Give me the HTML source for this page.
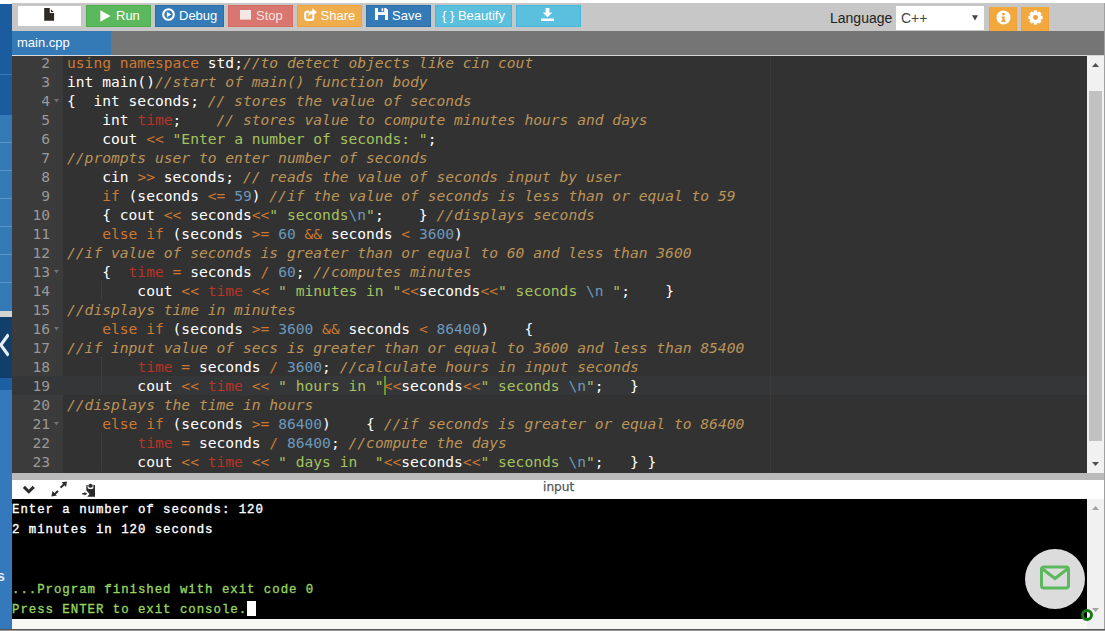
<!DOCTYPE html>
<html lang="en">
<head>
<meta charset="utf-8">
<title>main.cpp - Online C++ Compiler</title>
<style>
html,body{margin:0;padding:0;}
body{width:1105px;height:631px;overflow:hidden;background:#fff;position:relative;font-family:"Liberation Sans",Arial,sans-serif;}
.abs{position:absolute;}
/* left sidebar */
#side{left:0;top:4px;width:12px;height:625px;background:#337ab7;overflow:hidden;}
#side div{position:absolute;left:0;width:12px;}
/* toolbar */
#toolbar{left:12px;top:3px;width:1092px;height:28px;background:#c7c7c7;}
.btn{position:absolute;top:5px;height:22px;color:#fff;font-size:13px;line-height:22px;white-space:nowrap;}
.btn span{position:absolute;top:0;}
#tabbar{left:12px;top:31px;width:1092px;height:24px;background:#757575;}
#tab{left:12px;top:31px;width:99px;height:24px;background:#337ab7;color:#fff;font-size:13px;line-height:24px;}
/* editor */
#editor{left:12px;top:56px;width:1075px;height:417px;background:#323232;overflow:hidden;font-family:"DejaVu Sans Mono","Liberation Mono",monospace;font-size:14.615px;color:#fff;}
#gutter{position:absolute;left:0;top:0;width:51px;height:417px;background:#3b3b3b;}
.ln{position:absolute;left:0;width:38px;height:19px;line-height:19px;text-align:right;color:#999;}
.cl{position:absolute;left:55px;height:19px;line-height:19px;white-space:pre;}
.k{color:#CC7833;}
.n{color:#6C99BB;}
.s{color:#A5C261;}
.c{color:#BC9458;font-style:italic;}
.f{color:#B83426;}
/* console */
#conbar{left:12px;top:480px;width:1092px;height:19px;background:#fff;}
#console{left:12px;top:499px;width:1075px;height:120px;background:#000;font-family:"Liberation Mono",monospace;font-size:12.4px;letter-spacing:0.96px;-webkit-text-stroke:0.35px currentColor;color:#fff;}
.tl{position:absolute;left:0;height:20px;line-height:20px;white-space:pre;}
.g{color:#96d45c;}
</style>
</head>
<body>
<!-- toolbar -->
<div id="toolbar" class="abs"></div>
<div id="tabbar" class="abs"></div>
<div id="tab" class="abs"><span style="position:absolute;left:5px;">main.cpp</span></div>
<div class="abs" style="left:12px;top:55px;width:1092px;height:1px;background:#d8d8d8;"></div>

<!-- toolbar buttons -->
<div class="abs" style="left:18px;top:6px;width:63px;height:20px;background:#fff;">
<svg style="position:absolute;left:26px;top:2px" width="11" height="13" viewBox="0 0 11 13"><path d="M0.2 0h5.6v4.9h4.3V12.7H0.2z M6.9 1.2L9.8 4H6.9z" fill="#2e2a26"/></svg>
</div>
<div class="btn" style="left:86px;width:65px;background:#5cb85c;box-shadow:inset 0 0 0 1px #4cae4c;">
<svg style="position:absolute;left:14px;top:5px" width="11" height="12" viewBox="0 0 11 12"><path d="M0.3 0.2L10.6 6L0.3 11.8z" fill="#fff"/></svg>
<span style="left:30px">Run</span></div>
<div class="btn" style="left:155px;width:69px;background:#337ab7;box-shadow:inset 0 0 0 1px #2e6da4;">
<svg style="position:absolute;left:7px;top:3px" width="13" height="13" viewBox="0 0 13 13"><circle cx="6.5" cy="6.5" r="5.3" fill="none" stroke="#fff" stroke-width="2.1"/><path d="M4.9 3.7L9.3 6.5L4.9 9.3z" fill="#fff"/></svg>
<span style="left:24px">Debug</span></div>
<div class="btn" style="left:228px;width:65px;background:#d9766f;color:#f4e4e2;box-shadow:inset 0 0 0 1px #d66b64;">
<svg style="position:absolute;left:12px;top:5px" width="11" height="10" viewBox="0 0 11 10"><rect x="0" y="0" width="11" height="9.6" fill="#f4e8e6"/></svg>
<span style="left:28px">Stop</span></div>
<div class="btn" style="left:297px;width:65px;background:#f0ad4e;box-shadow:inset 0 0 0 1px #eea236;">
<svg style="position:absolute;left:7px;top:3px" width="13" height="13" viewBox="0 0 13 13"><path d="M9.3 8.4v1.4a2 2 0 0 1-2 2H3.2a2 2 0 0 1-2-2V5.6a2 2 0 0 1 2-2h1.2" fill="none" stroke="#fff" stroke-width="2.2" stroke-linecap="round"/><path d="M8.3 0.3L13 4.3L8.3 8.3V5.9C6.3 5.9 5 6.9 4.4 9C4 5.4 5.6 3 8.3 2.7z" fill="#fff"/></svg>
<span style="left:23.5px">Share</span></div>
<div class="btn" style="left:366px;width:65px;background:#337ab7;box-shadow:inset 0 0 0 1px #2e6da4;">
<svg style="position:absolute;left:9px;top:3px" width="13" height="12" viewBox="0 0 13 12"><path d="M0 0h3v4h6.2V0H11l2 2v10H0z M6.6 0.3h1.6v2.9H6.6z M3 7h7v5H3z" fill="#fff" fill-rule="evenodd"/><path d="M3 7.6h7v4.4H3z" fill="#337ab7"/></svg>
<span style="left:26px">Save</span></div>
<div class="btn" style="left:435px;width:77px;background:#5bc0de;box-shadow:inset 0 0 0 1px #46b8da;">
<span style="left:7px">{ } Beautify</span></div>
<div class="btn" style="left:516px;width:65px;background:#5bc0de;box-shadow:inset 0 0 0 1px #46b8da;">
<svg style="position:absolute;left:25px;top:3px" width="13" height="13" viewBox="0 0 13 13"><path d="M4.6 0h3.8v4.6h2.9L6.5 9.3 1.7 4.6h2.9z M0 10.4h13V13H0z" fill="#fff"/></svg>
</div>
<div class="abs" style="left:830px;top:10px;font-size:14px;line-height:16px;color:#222;">Language</div>
<div class="abs" style="left:896px;top:6px;width:88px;height:24px;background:#fff;font-size:14px;line-height:24px;color:#444;"><span style="position:absolute;left:5px;">C++</span>
<svg style="position:absolute;left:76px;top:9px" width="6" height="6" viewBox="0 0 6 6"><path d="M0 0.3h6L3 5.6z" fill="#444"/></svg></div>
<div class="abs" style="left:989px;top:7px;width:26px;height:24px;background:#f3a83e;border-left:1px solid #eea236;border-right:1px solid #eea236;">
<svg style="position:absolute;left:6px;top:3.2px" width="15" height="15" viewBox="0 0 15 15"><circle cx="7.5" cy="7.5" r="7" fill="#fff"/><path d="M6.3 3h2.4v2.2H6.3z M5.6 6.4h3.1v4h1v1.6H5.4v-1.6h1V8h-0.8z" fill="#f0a030"/></svg>
</div>
<div class="abs" style="left:1021px;top:7px;width:26px;height:24px;background:#f3a83e;border-left:1px solid #eea236;border-right:1px solid #eea236;">
<svg style="position:absolute;left:6px;top:3.2px" width="15" height="15" viewBox="-7.5 -7.5 15 15"><g fill="#fff"><circle r="5.6"/><rect x="-1.7" y="-7.1" width="3.4" height="14.2"/><rect x="-1.7" y="-7.1" width="3.4" height="14.2" transform="rotate(45)"/><rect x="-1.7" y="-7.1" width="3.4" height="14.2" transform="rotate(90)"/><rect x="-1.7" y="-7.1" width="3.4" height="14.2" transform="rotate(135)"/></g><circle r="2.4" fill="#f0a030"/></svg>
</div>

<!-- editor -->
<div id="editor" class="abs">
<div style="position:absolute;left:0;top:320px;width:1075px;height:19px;background:#353637;"></div>
<div style="position:absolute;left:758px;top:0;width:1px;height:417px;background:#3b3b3b;"></div>
<div id="gutter">
<svg style="position:absolute;left:42px;top:43px" width="5" height="4" viewBox="0 0 5 4"><path d="M0 0h5L2.5 3.6z" fill="#707070"/></svg>
<svg style="position:absolute;left:42px;top:214px" width="5" height="4" viewBox="0 0 5 4"><path d="M0 0h5L2.5 3.6z" fill="#707070"/></svg>
<svg style="position:absolute;left:42px;top:271px" width="5" height="4" viewBox="0 0 5 4"><path d="M0 0h5L2.5 3.6z" fill="#707070"/></svg>
<svg style="position:absolute;left:42px;top:366px" width="5" height="4" viewBox="0 0 5 4"><path d="M0 0h5L2.5 3.6z" fill="#707070"/></svg>
<div style="position:absolute;left:0;top:320px;width:51px;height:19px;background:#353637;"></div>
<div class="ln" style="top:-3px">2</div>
<div class="ln" style="top:16px">3</div>
<div class="ln" style="top:35px">4</div>
<div class="ln" style="top:54px">5</div>
<div class="ln" style="top:73px">6</div>
<div class="ln" style="top:92px">7</div>
<div class="ln" style="top:111px">8</div>
<div class="ln" style="top:130px">9</div>
<div class="ln" style="top:149px">10</div>
<div class="ln" style="top:168px">11</div>
<div class="ln" style="top:187px">12</div>
<div class="ln" style="top:206px">13</div>
<div class="ln" style="top:225px">14</div>
<div class="ln" style="top:244px">15</div>
<div class="ln" style="top:263px">16</div>
<div class="ln" style="top:282px">17</div>
<div class="ln" style="top:301px">18</div>
<div class="ln" style="top:320px">19</div>
<div class="ln" style="top:339px">20</div>
<div class="ln" style="top:358px">21</div>
<div class="ln" style="top:377px">22</div>
<div class="ln" style="top:396px">23</div>
</div>
<div id="lines">
<div style="position:absolute;left:372px;top:320px;width:2px;height:19px;background:#5f9a2a;"></div>
<div style="position:absolute;left:89px;top:225px;width:1px;height:19px;background:#3e3e3e;"></div>
<div style="position:absolute;left:89px;top:301px;width:1px;height:19px;background:#3e3e3e;"></div>
<div style="position:absolute;left:89px;top:320px;width:1px;height:19px;background:#3e3e3e;"></div>
<div style="position:absolute;left:89px;top:377px;width:1px;height:19px;background:#3e3e3e;"></div>
<div style="position:absolute;left:89px;top:396px;width:1px;height:19px;background:#3e3e3e;"></div>
<div class="cl" style="top:-3px"><span class="k">using</span> <span class="k">namespace</span> std;<span class="c">//to detect objects like cin cout</span></div>
<div class="cl" style="top:16px">int main()<span class="c">//start of main() function body</span></div>
<div class="cl" style="top:35px">{  int seconds; <span class="c">// stores the value of seconds</span></div>
<div class="cl" style="top:54px">    int <span class="f">time</span>;    <span class="c">// stores value to compute minutes hours and days</span></div>
<div class="cl" style="top:73px">    cout <span class="k">&lt;&lt;</span> <span class="s">"Enter a number of seconds: "</span>;</div>
<div class="cl" style="top:92px"><span class="c">//prompts user to enter number of seconds</span></div>
<div class="cl" style="top:111px">    cin <span class="k">&gt;&gt;</span> seconds; <span class="c">// reads the value of seconds input by user</span></div>
<div class="cl" style="top:130px">    <span class="k">if</span> (seconds <span class="k">&lt;=</span> <span class="n">59</span>) <span class="c">//if the value of seconds is less than or equal to 59</span></div>
<div class="cl" style="top:149px">    { cout <span class="k">&lt;&lt;</span> seconds<span class="k">&lt;&lt;</span><span class="s">" seconds</span><span class="n">\n</span><span class="s">"</span>;    } <span class="c">//displays seconds</span></div>
<div class="cl" style="top:168px">    <span class="k">else</span> <span class="k">if</span> (seconds <span class="k">&gt;=</span> <span class="n">60</span> <span class="k">&amp;&amp;</span> seconds <span class="k">&lt;</span> <span class="n">3600</span>)</div>
<div class="cl" style="top:187px"><span class="c">//if value of seconds is greater than or equal to 60 and less than 3600</span></div>
<div class="cl" style="top:206px">    {  <span class="f">time</span> <span class="k">=</span> seconds <span class="k">/</span> <span class="n">60</span>; <span class="c">//computes minutes</span></div>
<div class="cl" style="top:225px">        cout <span class="k">&lt;&lt;</span> <span class="f">time</span> <span class="k">&lt;&lt;</span> <span class="s">" minutes in "</span><span class="k">&lt;&lt;</span>seconds<span class="k">&lt;&lt;</span><span class="s">" seconds </span><span class="n">\n</span><span class="s"> "</span>;    }</div>
<div class="cl" style="top:244px"><span class="c">//displays time in minutes</span></div>
<div class="cl" style="top:263px">    <span class="k">else</span> <span class="k">if</span> (seconds <span class="k">&gt;=</span> <span class="n">3600</span> <span class="k">&amp;&amp;</span> seconds <span class="k">&lt;</span> <span class="n">86400</span>)    {</div>
<div class="cl" style="top:282px"><span class="c">//if input value of secs is greater than or equal to 3600 and less than 85400</span></div>
<div class="cl" style="top:301px">        <span class="f">time</span> <span class="k">=</span> seconds <span class="k">/</span> <span class="n">3600</span>; <span class="c">//calculate hours in input seconds</span></div>
<div class="cl" style="top:320px">        cout <span class="k">&lt;&lt;</span> <span class="f">time</span> <span class="k">&lt;&lt;</span> <span class="s">" hours in "</span><span class="k">&lt;&lt;</span>seconds<span class="k">&lt;&lt;</span><span class="s">" seconds </span><span class="n">\n</span><span class="s">"</span>;   }</div>
<div class="cl" style="top:339px"><span class="c">//displays the time in hours</span></div>
<div class="cl" style="top:358px">    <span class="k">else</span> <span class="k">if</span> (seconds <span class="k">&gt;=</span> <span class="n">86400</span>)    { <span class="c">//if seconds is greater or equal to 86400</span></div>
<div class="cl" style="top:377px">        <span class="f">time</span> <span class="k">=</span> seconds <span class="k">/</span> <span class="n">86400</span>; <span class="c">//compute the days</span></div>
<div class="cl" style="top:396px">        cout <span class="k">&lt;&lt;</span> <span class="f">time</span> <span class="k">&lt;&lt;</span> <span class="s">" days in  "</span><span class="k">&lt;&lt;</span>seconds<span class="k">&lt;&lt;</span><span class="s">" seconds </span><span class="n">\n</span><span class="s">"</span>;   } }</div>
</div>
</div>

<!-- splitter + console -->
<div class="abs" style="left:12px;top:473px;width:1092px;height:7px;background:#bababa;"></div>
<div id="conbar" class="abs">
<svg style="position:absolute;left:8px;top:3px" width="18" height="14" viewBox="8 3 18 14"><path d="M11.9 6.9L16.8 11.7L21.7 6.9" fill="none" stroke="#2b2b2b" stroke-width="3"/></svg>
<svg style="position:absolute;left:38px;top:0px" width="18" height="18" viewBox="38 0 18 18"><path d="M48.6 7.6L52.6 3.7 M46 11.1L41.8 15" stroke="#2b2b2b" stroke-width="2"/><path d="M55 1.4L49.6 2.3L54 6.9z M39.4 16.4L44.9 15.6L40.4 11.1z" fill="#2b2b2b"/></svg>
<svg style="position:absolute;left:68px;top:2px" width="17" height="16" viewBox="68 2 17 16"><path d="M74.3 4.9h1.3v2.6a1.4 1.4 0 0 0 1.4 1.4h3a1.4 1.4 0 0 0 1.4-1.4V4.9H83V16.8H75.2L77.6 14L74.3 10.6z" fill="#2b2b2b"/><ellipse cx="78.5" cy="5.9" rx="2.3" ry="1.8" fill="#2b2b2b"/><path d="M77.3 5L78.5 3.6L79.7 5z" fill="#2b2b2b"/><path d="M70.2 13h2.3v-1.1l2.8 1.8-2.8 1.8v-1.1h-2.3z" fill="#2b2b2b"/></svg>
<span style="position:absolute;left:531px;top:0;font-family:'DejaVu Sans','Liberation Sans',sans-serif;font-size:12.2px;line-height:14px;color:#555;-webkit-text-stroke:0.25px #555;">input</span>
</div>
<div id="console" class="abs">
<div class="tl" style="top:1px">Enter a number of seconds: 120</div>
<div class="tl" style="top:21px">2 minutes in 120 seconds</div>
<div class="tl g" style="top:81px">...Program finished with exit code 0</div>
<div class="tl g" style="top:101px">Press ENTER to exit console.</div>
<div style="position:absolute;left:235px;top:102px;width:9px;height:15px;background:#fff;"></div>
</div>
<div class="abs" style="left:12px;top:619px;width:1075px;height:10px;background:#f8f8f5;"></div>
<div class="abs" style="left:1087px;top:619px;width:17px;height:10px;background:#f1f1f1;"></div>

<!-- editor scrollbar -->
<div class="abs" style="left:1087px;top:56px;width:17px;height:417px;background:#f1f1f1;">
<svg style="position:absolute;left:5px;top:7px" width="7" height="4" viewBox="0 0 7 4"><path d="M0 4h7L3.5 0z" fill="#505050"/></svg>
<div style="position:absolute;left:2px;top:35px;width:13px;height:350px;background:#c1c1c1;"></div>
<svg style="position:absolute;left:5px;top:406px" width="7" height="4" viewBox="0 0 7 4"><path d="M0 0h7L3.5 4z" fill="#505050"/></svg>
</div>
<!-- console scrollbar -->
<div class="abs" style="left:1087px;top:499px;width:17px;height:120px;background:#f1f1f1;">
<svg style="position:absolute;left:5px;top:7px" width="7" height="4" viewBox="0 0 7 4"><path d="M0 4h7L3.5 0z" fill="#a3a3a3"/></svg>
<svg style="position:absolute;left:5px;top:109px" width="7" height="4" viewBox="0 0 7 4"><path d="M0 0h7L3.5 4z" fill="#a3a3a3"/></svg>
</div>
<!-- floating mail button -->
<div class="abs" style="left:1025px;top:549px;width:60px;height:60px;border-radius:30px;background:#dcdcdc;">
<svg style="position:absolute;left:13px;top:15px" width="34" height="28" viewBox="0 0 34 28"><rect x="3.5" y="3" width="27" height="21" rx="2.5" fill="none" stroke="#5cb85c" stroke-width="3"/><path d="M4 4.5L17 14.5L30 4.5" fill="none" stroke="#5cb85c" stroke-width="3"/></svg>
</div>
<div class="abs" style="left:1081px;top:609px;width:6px;height:6px;border-radius:6px;border:3px solid #157a15;"></div>

<!-- left sidebar -->
<div id="side" class="abs">
<div style="top:0;height:111px;background:#1b5c9e;"></div>
<div style="top:70px;height:1px;background:#3a78b8;"></div>
<div style="top:111px;height:196px;background:#337ab7;"></div>
<div style="top:138px;height:1px;background:#5a95cc;"></div>
<div style="top:166px;height:1px;background:#5a95cc;"></div>
<div style="top:194px;height:1px;background:#5a95cc;"></div>
<div style="top:222px;height:1px;background:#5a95cc;"></div>
<div style="top:250px;height:1px;background:#5a95cc;"></div>
<div style="top:278px;height:1px;background:#5a95cc;"></div>
<div style="top:307px;height:6px;background:#d3d3d3;"></div>
<div style="top:313px;height:61px;background:#123e6c;"></div>
<svg style="position:absolute;left:0;top:329px" width="9" height="24" viewBox="0 0 9 24"><path d="M8.5 1.5L0.8 12L8.5 22.5" fill="none" stroke="#e8eef5" stroke-width="3.2"/></svg>
<div style="top:374px;height:12px;background:#1d5fa3;"></div>
<div style="top:386px;height:240px;background:#3379bb;"></div>
<span style="position:absolute;left:-3px;top:564px;font-size:14px;line-height:16px;color:#e0ecf8;font-weight:bold;">s</span>
</div>

<!-- frame lines -->
<div class="abs" style="left:1104px;top:3px;width:1px;height:626px;background:#a0a0a0;"></div>
<div class="abs" style="left:0;top:629px;width:1105px;height:1px;background:#555;"></div>
<div class="abs" style="left:0;top:630px;width:1105px;height:1px;background:#999;"></div>
</body>
</html>
